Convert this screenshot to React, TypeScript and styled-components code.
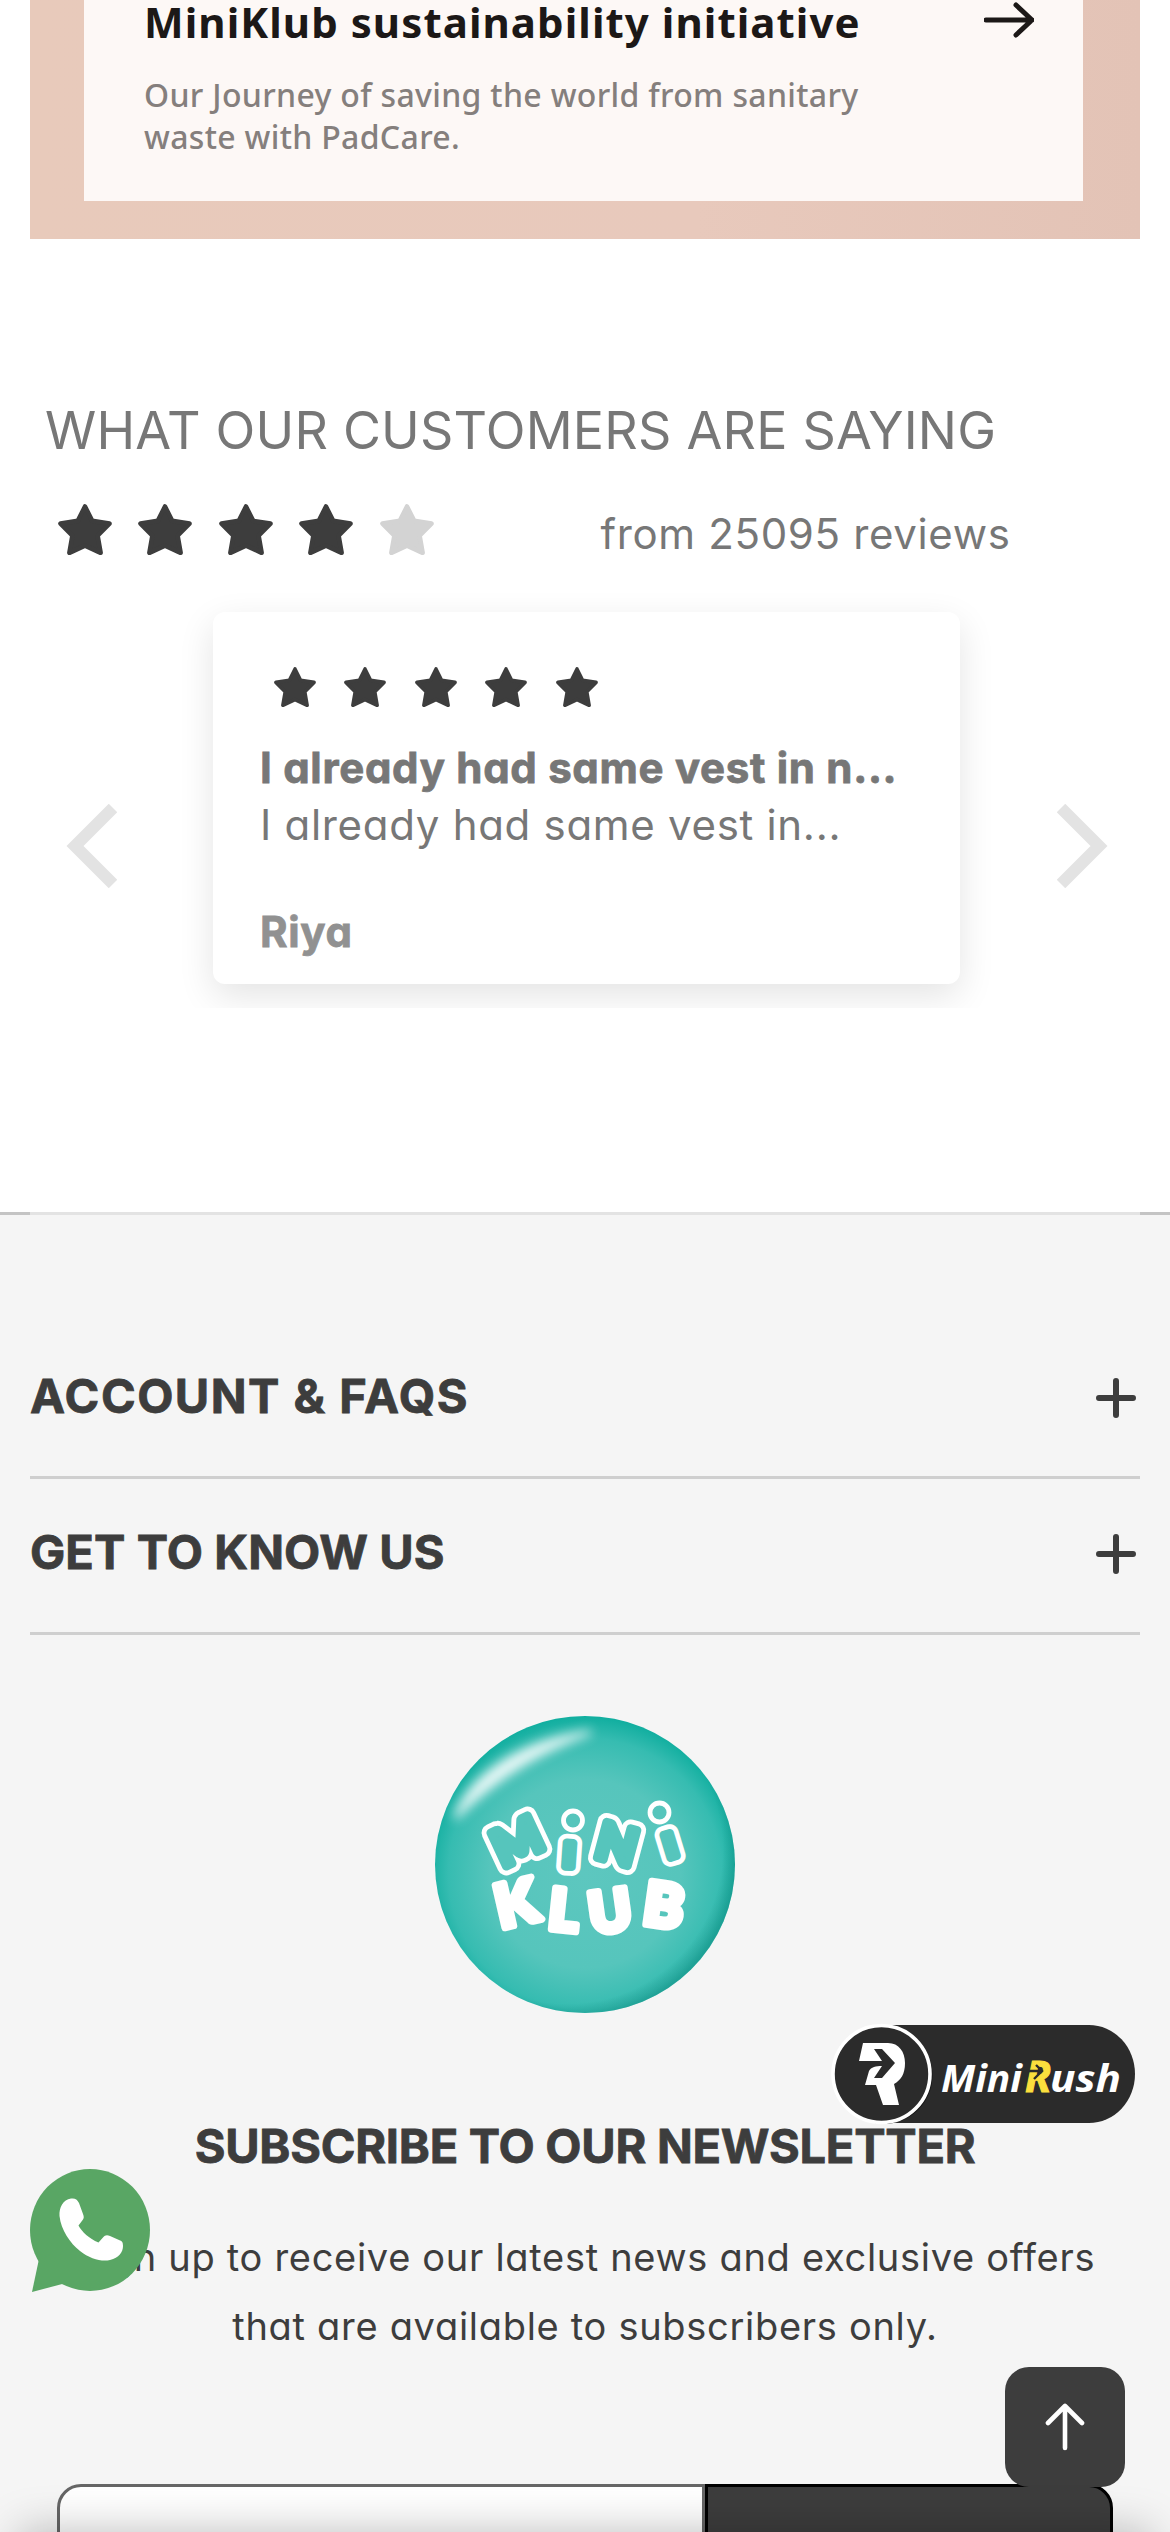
import React from "react";
import styled, { createGlobalStyle } from "styled-components";

const INK = "#3d3d3d";

const GlobalStyle = createGlobalStyle`
  * { box-sizing: border-box; }
  html, body { margin: 0; padding: 0; background: #fff; }
  body { overflow: hidden; }
`;

const Page = styled.div`
  position: relative;
  width: 1170px;
  height: 2532px;
  overflow: hidden;
  display: flex;
  flex-direction: column;
  background: #fff;
  color: #777;
  font-family: Inter, "Liberation Sans", sans-serif;
  font-feature-settings: "cv11", "calt" 0;
`;

/* ---------- Banner ---------- */

const Banner = styled.section`
  flex: none;
  height: 239px;
  margin: 0 30px;
  padding: 0 57px 38px 54px;
  background: linear-gradient(90deg, #e8cabb, #e8c9bc 60%, #e3c3b6);
`;

const BannerCard = styled.div`
  height: 201px;
  padding: 0 49px 0 60px;
  display: flex;
  justify-content: space-between;
  background: #fdf8f6;
  font-family: "Noto Sans", sans-serif;
`;

const BannerTitle = styled.h2`
  margin: 0;
  font-size: 42px;
  line-height: 44px;
  font-weight: 700;
  letter-spacing: 1.06px;
  color: #1c1817;
  white-space: nowrap;
`;

const BannerText = styled.p`
  margin: 30px 0 0;
  font-size: 32px;
  line-height: 42px;
  font-weight: 500;
  letter-spacing: 0.32px;
  color: #857f7d;
  white-space: nowrap;
`;

/* ---------- Reviews ---------- */

const Reviews = styled.section`
  flex: none;
  height: 973px;
  padding-top: 162px;
`;

const ReviewsTitle = styled.h2`
  margin: 0 0 0 45px;
  font-size: 52px;
  line-height: 60px;
  font-weight: 400;
  letter-spacing: 0.2px;
  white-space: nowrap;
`;

const Summary = styled.div`
  display: flex;
  height: 60px;
  margin: 43px 0 0 58px;
`;

const SummaryText = styled.span`
  margin-left: 167px;
  font-size: 42px;
  line-height: 60px;
  letter-spacing: 0.65px;
  white-space: nowrap;
`;

const StarRow = styled.div<{ $gap: number }>`
  display: flex;
  align-items: flex-start;
  gap: ${(p) => p.$gap}px;
`;

const Carousel = styled.div`
  display: grid;
  grid-template-columns: 173px 827px 170px;
  height: 444px;
`;

const ArrowCell = styled.button<{ $inset: number }>`
  display: flex;
  align-items: center;
  padding: 120px 0 0 ${(p) => p.$inset}px;
  border: 0;
  background: none;
`;

const Viewport = styled.div`
  overflow: hidden;
  padding: 48px 40px 24px;
`;

const ReviewCard = styled.article`
  height: 372px;
  padding: 55px 40px 0 47px;
  border-radius: 12px;
  background: #fff;
  box-shadow: 0 12px 36px rgba(0, 0, 0, 0.11);
  ${StarRow} { margin-left: 14px; }
`;

const ReviewLine = styled.p<{ $bold?: boolean; $top?: number; $color?: string }>`
  margin: ${(p) => p.$top ?? 0}px 0 0;
  font-size: 42px;
  line-height: 56.5px;
  font-weight: ${(p) => (p.$bold ? 700 : 400)};
  letter-spacing: 0.7px;
  color: ${(p) => p.$color ?? "#777"};
  -webkit-text-stroke: ${(p) => (p.$bold ? "0.8px currentColor" : "0")};
  white-space: nowrap;
`;

/* ---------- Footer ---------- */

const Footer = styled.footer`
  flex: none;
  height: 1320px;
  background: #f5f5f5;
  color: ${INK};
`;

const FooterRule = styled.div`
  height: 3px;
  padding: 0 30px;
  background: #c4c4c4;
  &::before {
    content: "";
    display: block;
    height: 3px;
    background: #e3e3e3;
  }
`;

const Accordion = styled.div`
  padding: 108px 30px 0;
`;

const AccordionRow = styled.div`
  height: 156px;
  padding: 0 4px 3px 0;
  display: flex;
  align-items: center;
  justify-content: space-between;
  border-bottom: 3px solid #cfcfcf;
`;

const FooterHeading = styled.h3<{ $spacing?: number }>`
  margin: -4px 0 0;
  font-size: 47px;
  line-height: 60px;
  font-weight: 700;
  letter-spacing: ${(p) => p.$spacing ?? 0}px;
  -webkit-text-stroke: 0.8px currentColor;
  white-space: nowrap;
`;

const Newsletter = styled.div`
  display: flex;
  flex-direction: column;
  align-items: center;
  padding-top: 81px;
  ${FooterHeading} { margin-top: 103px; }
`;

const NewsletterText = styled.p`
  margin: 47px 0 0;
  font-size: 38px;
  line-height: 69px;
  letter-spacing: 0.7px;
  text-align: center;
  white-space: nowrap;
`;

const Form = styled.div`
  display: flex;
  width: 1056px;
  height: 132px;
  margin-top: 123px;
`;

const Field = styled.div`
  width: 648px;
  border: 3px solid #666;
  border-radius: 24px 0 0 24px;
  background: #fff;
`;

const Submit = styled.div`
  flex: 1;
  border: 3px solid #000;
  border-radius: 0 24px 24px 0;
  background: ${INK};
`;

/* ---------- Floating controls ---------- */

const Floating = styled.div<{ $x: number; $y: number }>`
  position: absolute;
  left: ${(p) => p.$x}px;
  top: ${(p) => p.$y}px;
  display: flex;
`;

const TopButton = styled.button`
  width: 120px;
  height: 120px;
  padding: 0;
  display: flex;
  align-items: center;
  justify-content: center;
  border: 0;
  border-radius: 24px;
  background: ${INK};
`;

const BottomBar = styled.div`
  position: absolute;
  left: 20px;
  right: 20px;
  top: 2532px;
  height: 120px;
  box-shadow: 0 0 45px rgba(0, 0, 0, 0.27);
`;

/* ---------- Drawings ---------- */

const Star = ({ w, h, color = INK }: { w: number; h: number; color?: string }) => (
  <svg width={w} height={h} viewBox="0 0 54 50" preserveAspectRatio="none">
    <path
      d="M27 2.5 34.2 16.6 51.5 19.2 39.6 31 42.6 47.8 27 40.8 11.4 47.8 14.4 31 2.5 19.2 19.8 16.6Z"
      fill={color}
      stroke={color}
      strokeWidth="4.6"
      strokeLinejoin="round"
    />
  </svg>
);

const Chevron = ({ flip = false }: { flip?: boolean }) => (
  <svg width="51" height="84" viewBox="0 0 51 84">
    <path d={flip ? "M4 4 42 42 4 80" : "M47 4 9 42 47 80"} fill="none" stroke="#e3e3e3" strokeWidth="12" />
  </svg>
);

const Plus = () => (
  <svg width="40" height="40" viewBox="0 0 40 40">
    <path d="M20 3V37M3 20H37" stroke={INK} strokeWidth="6" strokeLinecap="round" />
  </svg>
);

const BannerArrow = () => (
  <svg width="50" height="38" viewBox="0 0 50 38">
    <path d="M2 20H48M32 5 48 20 32 35" fill="none" stroke="#1c1817" strokeWidth="5" strokeLinejoin="round" strokeLinecap="round" />
  </svg>
);

type Letter = { ch: string; x: number; y: number; r: number; size: number };

const MINI: Letter[] = [
  { ch: "M", x: 82, y: 125, r: -25, size: 51 },
  { ch: "ı", x: 134, y: 139, r: 4, size: 46 },
  { ch: "N", x: 182, y: 128, r: 15, size: 51 },
  { ch: "ı", x: 235, y: 129.5, r: -17, size: 46 },
];
const DOTS = [
  { x: 138, y: 104.5 },
  { x: 224.5, y: 96.5 },
];
const KLUB: Letter[] = [
  { ch: "K", x: 81, y: 187, r: -13, size: 60 },
  { ch: "L", x: 129, y: 194, r: 6, size: 57 },
  { ch: "U", x: 175, y: 195, r: -8, size: 57 },
  { ch: "B", x: 229, y: 189, r: 8, size: 60 },
];

const Glyph = ({ l, fill, width }: { l: Letter; fill: string; width: number }) => (
  <text
    transform={`translate(${l.x} ${l.y}) rotate(${l.r})`}
    y={l.size * (l.ch === "ı" ? 0.255 : 0.36)}
    textAnchor="middle"
    fontFamily="Lato, sans-serif"
    fontWeight="900"
    fontSize={l.size}
    fill={fill}
    stroke={fill}
    strokeWidth={width}
    strokeLinejoin="round"
  >
    {l.ch}
  </text>
);

const MiniKlubLogo = () => (
  <svg width="300" height="297" viewBox="0 0 300 297">
    <defs>
      <radialGradient id="badge" cx="0.5" cy="0.53" r="0.53">
        <stop offset="0" stopColor="#5dc7bf" />
        <stop offset="0.6" stopColor="#56c5bc" />
        <stop offset="0.86" stopColor="#36bcb1" />
        <stop offset="1" stopColor="#10ae9f" />
      </radialGradient>
      <radialGradient id="shade" cx="0.44" cy="0.45" r="0.57">
        <stop offset="0.91" stopColor="#0c7f75" stopOpacity="0" />
        <stop offset="1" stopColor="#0c7f75" stopOpacity="0.4" />
      </radialGradient>
      <filter id="soft" x="-20%" y="-20%" width="140%" height="140%">
        <feGaussianBlur stdDeviation="6" />
      </filter>
      <clipPath id="disc"><ellipse cx="150" cy="148.5" rx="150" ry="148.5" /></clipPath>
    </defs>
    <ellipse cx="150" cy="148.5" rx="150" ry="148.5" fill="url(#badge)" />
    <ellipse cx="150" cy="148.5" rx="150" ry="148.5" fill="url(#shade)" />
    <g clipPath="url(#disc)">
      <path d="M20 102C36 60 84 26 156 16C112 32 66 56 20 102Z" fill="#fff" stroke="#fff" strokeWidth="4" opacity="0.9" filter="url(#soft)" />
    </g>
    {MINI.map((l, i) => <Glyph key={`o${i}`} l={l} fill="#fff" width={18} />)}
    {MINI.map((l, i) => <Glyph key={`i${i}`} l={l} fill="#56c5bc" width={8.4} />)}
    {DOTS.map((d, i) => <circle key={i} cx={d.x} cy={d.y} r="9.5" fill="#56c5bc" stroke="#fff" strokeWidth="4.8" />)}
    {KLUB.map((l, i) => <Glyph key={`k${i}`} l={l} fill="#fff" width={7} />)}
  </svg>
);

const RushBadge = () => (
  <svg width="306" height="104" viewBox="0 0 306 104">
    <path d="M50 3H258A46 49 0 0 1 258 101H50Z" fill="#2b2b2b" />
    <circle cx="53" cy="53.5" r="48.5" fill="#161616" />
    <circle cx="50.5" cy="52" r="48.5" fill="#2b2b2b" stroke="#fff" strokeWidth="3.6" />
    <path
      d="M32 21H57C68 21 74 30 74 41C74 52 70 58 63 62L68 83H52L45 63H34L38 49C40 45 45 44 51 44L43 56H51L64 41L51 27H43L51 39H28Z"
      fill="#fff"
    />
    <g fontFamily='"Noto Sans", sans-serif' fontWeight="700" fontStyle="italic" fontSize="38" fill="#fff">
      <text x="110" y="70" textLength="81" lengthAdjust="spacingAndGlyphs">Mini</text>
      <text x="194" y="70" fontSize="43" fill="#fbdf3d" stroke="#fbdf3d" strokeWidth="1.2" textLength="26" lengthAdjust="spacingAndGlyphs">R</text>
      <text x="219" y="70" textLength="71" lengthAdjust="spacingAndGlyphs">ush</text>
    </g>
    <path d="M195 49H209M205 43 211 49 203 57" fill="none" stroke="#2b2b2b" strokeWidth="2.4" />
  </svg>
);

const WhatsApp = () => (
  <svg width="120" height="124" viewBox="0 0 120 124">
    <ellipse cx="60" cy="61" rx="60" ry="61" fill="#59a664" />
    <path d="M9 90 2 123 36 114Z" fill="#59a664" />
    <path
      d="M41 29.5C33 31 29 38 29.5 47C31 61 40 74 50 82C60 90 72 93 80 91C89 89 93 83 93 77C93 73 92 72 89 71L80 67C77 65.5 75 66 73 68.5L68.5 73.5C59 69.5 52 63 48.5 56.5L53 50.5C54 49 54 47.5 53 45L49 34C47 30 45 29 41 29.5Z"
      fill="#fff"
    />
  </svg>
);

const UpArrow = () => (
  <svg width="40" height="48" viewBox="0 0 40 48">
    <path d="M20 45V3M3 20 20 3 37 20" fill="none" stroke="#fff" strokeWidth="4.6" strokeLinecap="round" strokeLinejoin="round" />
  </svg>
);

const SECTIONS = [
  { title: "ACCOUNT & FAQS", spacing: 1.5 },
  { title: "GET TO KNOW US", spacing: 0.1 },
];

export default function App() {
  return (
    <Page>
      <GlobalStyle />
      <Banner>
        <BannerCard>
          <div>
            <BannerTitle>MiniKlub sustainability initiative</BannerTitle>
            <BannerText>
              Our Journey of saving the world from sanitary
              <br />
              waste with PadCare.
            </BannerText>
          </div>
          <BannerArrow />
        </BannerCard>
      </Banner>

      <Reviews>
        <ReviewsTitle>WHAT OUR CUSTOMERS ARE SAYING</ReviewsTitle>
        <Summary>
          <StarRow $gap={26.4}>
            {[0, 1, 2, 3, 4].map((i) => (
              <Star key={i} w={54} h={51} color={i < 4 ? INK : "#d3d3d3"} />
            ))}
          </StarRow>
          <SummaryText>from 25095 reviews</SummaryText>
        </Summary>
        <Carousel>
          <ArrowCell $inset={66} aria-label="Previous review"><Chevron /></ArrowCell>
          <Viewport>
            <ReviewCard>
              <StarRow $gap={28.4}>
                {[0, 1, 2, 3, 4].map((i) => <Star key={i} w={42} h={40} />)}
              </StarRow>
              <ReviewLine $bold $top={33}>I already had same vest in n...</ReviewLine>
              <ReviewLine>I already had same vest in...</ReviewLine>
              <ReviewLine $bold $top={51} $color="#919191">Riya</ReviewLine>
            </ReviewCard>
          </Viewport>
          <ArrowCell $inset={57} aria-label="Next review"><Chevron flip /></ArrowCell>
        </Carousel>
      </Reviews>

      <Footer>
        <FooterRule />
        <Accordion>
          {SECTIONS.map((s) => (
            <AccordionRow key={s.title}>
              <FooterHeading $spacing={s.spacing}>{s.title}</FooterHeading>
              <Plus />
            </AccordionRow>
          ))}
        </Accordion>
        <Newsletter>
          <MiniKlubLogo />
          <FooterHeading $spacing={-0.25}>SUBSCRIBE TO OUR NEWSLETTER</FooterHeading>
          <NewsletterText>
            Sign up to receive our latest news and exclusive offers
            <br />
            that are available to subscribers only.
          </NewsletterText>
          <Form>
            <Field />
            <Submit />
          </Form>
        </Newsletter>
      </Footer>

      <Floating $x={831} $y={2022}><RushBadge /></Floating>
      <Floating $x={30} $y={2169}><WhatsApp /></Floating>
      <Floating $x={1005} $y={2367}>
        <TopButton aria-label="Back to top"><UpArrow /></TopButton>
      </Floating>
      <BottomBar />
    </Page>
  );
}
